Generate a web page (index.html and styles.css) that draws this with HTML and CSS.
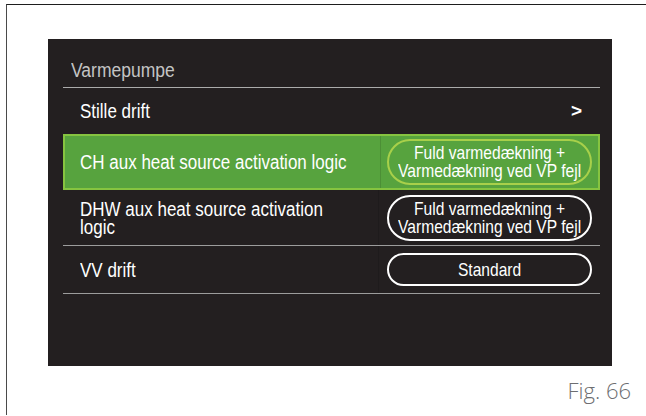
FILE: index.html
```html
<!DOCTYPE html>
<html>
<head>
  <meta charset="UTF-8">
  <meta name="viewport" content="width=device-width, initial-scale=1.0">
  <title>Varmepumpe</title>
  <link rel="stylesheet" href="styles.css">
</head>
<body>
  <div class="frame">
    <div class="panel">
      <div class="header"><span class="narrow">Varmepumpe</span></div>

      <div class="row row-link">
        <div class="label"><span class="narrow">Stille drift</span></div>
        <div class="arrow">&gt;</div>
      </div>

      <div class="row row-active">
        <div class="label"><span class="narrow">CH aux heat source activation logic</span></div>
        <div class="value">
          <div class="pill pill-active"><span class="narrow">Fuld varmedækning +<br>Varmedækning ved VP fejl</span></div>
        </div>
      </div>

      <div class="row row-tall">
        <div class="label"><span class="narrow">DHW aux heat source activation<br>logic</span></div>
        <div class="value">
          <div class="pill"><span class="narrow">Fuld varmedækning +<br>Varmedækning ved VP fejl</span></div>
        </div>
      </div>

      <div class="row row-short">
        <div class="label"><span class="narrow">VV drift</span></div>
        <div class="value">
          <div class="pill pill-single"><span class="narrow">Standard</span></div>
        </div>
      </div>
    </div>
    <div class="caption">Fig. 66</div>
  </div>
</body>
</html>
```

FILE: styles.css
```css
/* Side og ramme */
body {
  margin: 0;
  background: #fff;
  font-family: "Liberation Sans", Arial, sans-serif;
}
.frame {
  margin: 4px 0 0 6px;
  height: 411px;
  box-sizing: border-box;
  border-top: 1px solid #1e1e1e;
  border-left: 1px solid #4a4a4a;
  padding: 34px 0 0 41px;
}

/* Smal skrift (displayets condensed font) */
.narrow {
  display: inline-block;
  white-space: nowrap;
  transform: scaleX(0.85);
  transform-origin: left center;
}

/* Display */
.panel {
  width: 564px;
  height: 327px;
  box-sizing: border-box;
  background: #231f20;
  padding: 0 12px 0 15px;
  color: #fff;
}
.header {
  height: 49px;
  box-sizing: border-box;
  padding: 19px 0 0 8px;
  border-bottom: 1px solid #ababab;
  color: #c4c4c4;
  font-size: 20px;
  line-height: 24px;
}
.header .narrow {
  transform: scaleX(0.875);
}
.row {
  display: grid;
  grid-template-columns: 315px 1fr;
  align-items: center;
  box-sizing: border-box;
  font-size: 20px;
}
.label {
  padding-left: 17px;
  line-height: 18px;
}
.row-link {
  height: 46px;
  grid-template-columns: 1fr auto;
}
.arrow {
  padding-right: 18px;
  font-weight: bold;
  font-size: 19px;
}
.row-active {
  height: 56px;
  background: #57a33e;
  border: 2px solid #86c440;
}
.row-active .label {
  padding-left: 15px;
}
.row-tall {
  height: 56px;
  border-bottom: 1px solid #9c9c9c;
}
.row-short {
  height: 48px;
  border-bottom: 1px solid #9c9c9c;
}
.value {
  height: 100%;
  display: flex;
  align-items: center;
  padding-left: 8px;
  border-left: 1px solid rgba(0, 0, 0, 0.12);
}

/* Verdiknapper */
.pill {
  width: 205px;
  height: 46px;
  box-sizing: border-box;
  border: 2px solid #fff;
  border-radius: 24px;
  display: flex;
  align-items: center;
  justify-content: center;
  text-align: center;
  font-size: 19px;
  line-height: 18px;
}
.pill .narrow {
  transform: scaleX(0.82);
  transform-origin: center;
}
.pill-active {
  border-color: #a8d04a;
  margin-left: -2px;
}
.pill-single {
  height: 33px;
  border-radius: 17px;
  line-height: 20px;
}

.caption {
  width: 583px;
  margin-top: 9px;
  text-align: right;
  font-family: "Open Sans", sans-serif;
  font-weight: 300;
  font-size: 22px;
  color: #6d6e71;
}
```
